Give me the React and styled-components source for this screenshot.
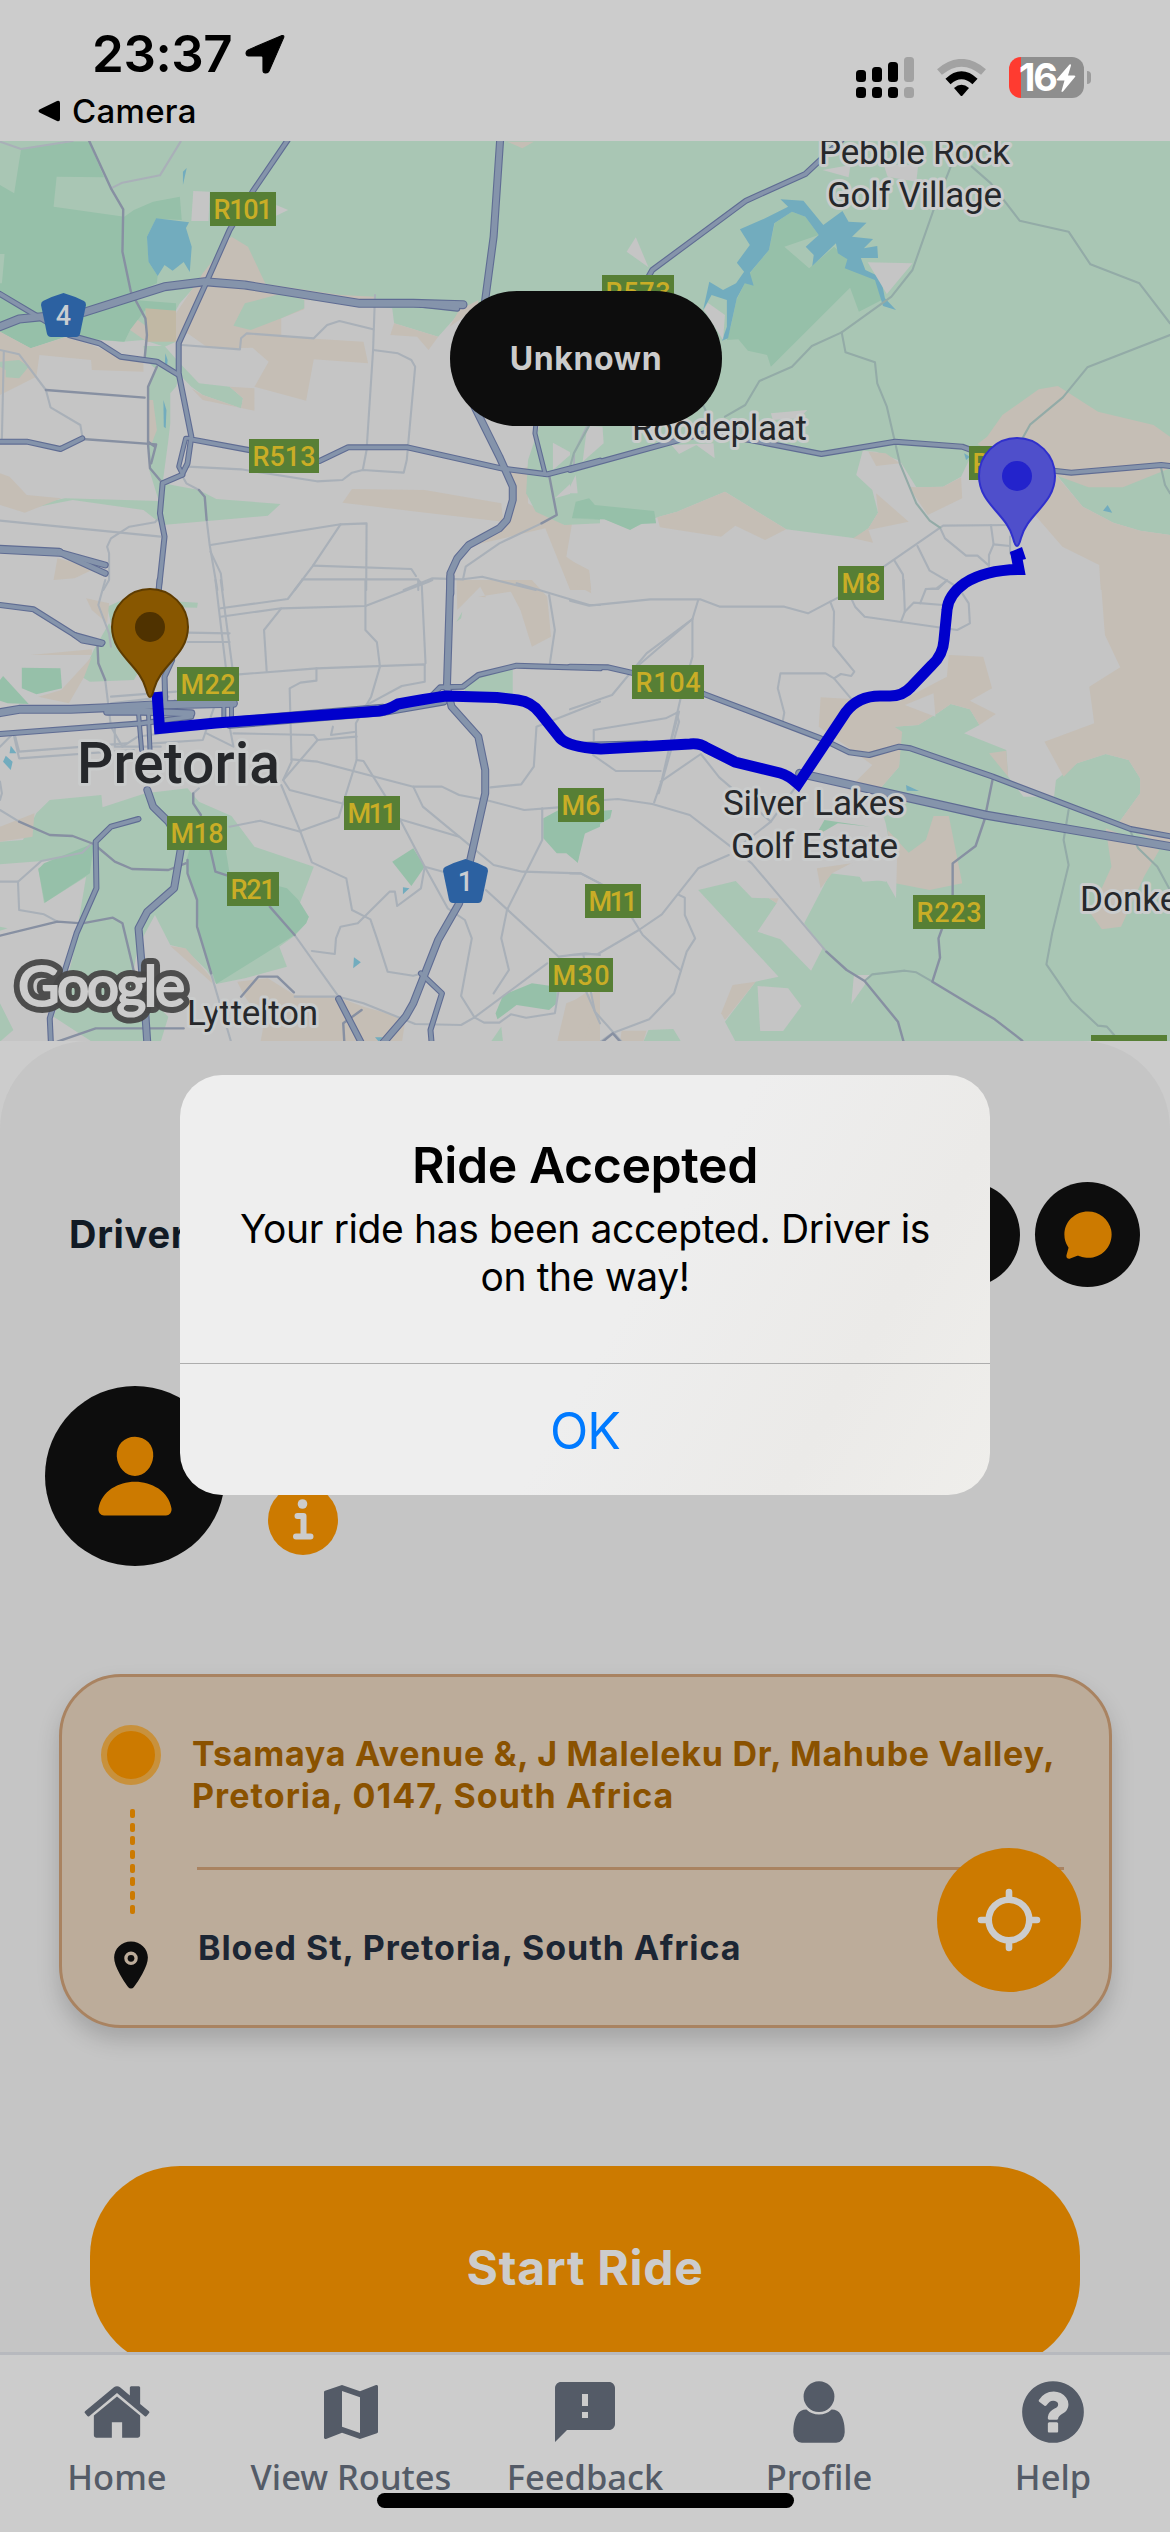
import React from "react";
import styled, { createGlobalStyle } from "styled-components";
import { IoPerson, IoChatbubble, IoCall, IoLocation } from "react-icons/io5";

const Global = createGlobalStyle`
  html, body { margin: 0; padding: 0; background: #cccccc; }
  * { box-sizing: border-box; }
`;

const ui = `Inter, "Liberation Sans", sans-serif`;
const orange = "#cc7a00";
const slate = "#545b67";

const Screen = styled.div`
  position: relative;
  width: 1170px;
  height: 2532px;
  overflow: hidden;
  display: flex;
  flex-direction: column;
  background: #cccccc;
  font-family: ${ui};
`;

/* ---------- status bar ---------- */
const StatusBar = styled.header`
  height: 141px;
  flex: none;
  display: flex;
  justify-content: space-between;
  padding: 23px 79px 0 38px;
  color: #000;
`;
const StatusLeft = styled.div`
  display: flex;
  flex-direction: column;
`;
const ClockRow = styled.div`
  display: flex;
  align-items: center;
  gap: 13px;
  height: 62px;
  padding-left: 54px;
`;
const Clock = styled.span`
  font-size: 51px;
  font-weight: 600;
  letter-spacing: -0.4px;
  line-height: 62px;
`;
const BackRow = styled.div`
  display: flex;
  align-items: center;
  gap: 11px;
  height: 40px;
  margin-top: 6px;
`;
const BackLabel = styled.span`
  font-size: 33px;
  font-weight: 500;
  letter-spacing: 0.3px;
  line-height: 40px;
`;
const StatusRight = styled.div`
  display: flex;
  align-items: flex-start;
  gap: 22px;
  padding-top: 34px;
`;
const Battery = styled.div`
  display: flex;
  align-items: center;
  gap: 3px;
`;
const BatteryBody = styled.div`
  width: 75px;
  height: 41px;
  border-radius: 12px;
  display: flex;
  align-items: center;
  justify-content: center;
  padding-left: 2px;
  background: linear-gradient(90deg, #ff3b30 12px, #8e8e8e 12px);
  color: #fff;
  font-size: 38px;
  font-weight: 700;
  letter-spacing: -2px;
  line-height: 41px;
`;
const BatteryNub = styled.div`
  width: 4px;
  height: 13px;
  border-radius: 0 4px 4px 0;
  background: #9c9c9c;
`;

/* ---------- map ---------- */
const MapArea = styled.section`
  position: relative;
  height: 900px;
  flex: none;
  background: #c5c5c5;
  overflow: hidden;
`;
const MapSvg = styled.svg`
  display: block;
  width: 1170px;
  height: 900px;
`;
const Pill = styled.div`
  position: absolute;
  left: 450px;
  top: 150px;
  width: 272px;
  height: 135px;
  border-radius: 67px;
  background: #0d0d0d;
  color: #cccccc;
  display: flex;
  align-items: center;
  justify-content: center;
  font-size: 32px;
  font-weight: 700;
  letter-spacing: 0.6px;
`;

/* ---------- sheet ---------- */
const Sheet = styled.main`
  flex: 1;
  min-height: 0;
  overflow: hidden;
  background: #c5c5c5;
  border-radius: 88px 88px 0 0;
  display: flex;
  flex-direction: column;
  padding-top: 141px;
`;
const DriverHead = styled.div`
  display: flex;
  align-items: center;
  justify-content: space-between;
  height: 105px;
  flex: none;
  padding: 0 30px 0 69px;
`;
const DriverTitle = styled.span`
  font-size: 38px;
  font-weight: 700;
  letter-spacing: 0.7px;
  padding-bottom: 2px;
  color: #111a24;
`;
const Actions = styled.div`
  display: flex;
  gap: 15px;
`;
const Disc = styled.div`
  width: ${(p) => p.$size}px;
  height: ${(p) => p.$size}px;
  flex: none;
  border-radius: 50%;
  display: flex;
  align-items: center;
  justify-content: center;
  background: ${(p) => p.$bg};
  color: ${(p) => p.$fg};
`;
const DriverRow = styled.div`
  display: flex;
  align-items: flex-end;
  gap: 43px;
  height: 180px;
  flex: none;
  margin-top: 99px;
  padding-left: 45px;
`;
const InfoSlot = styled.div`
  padding-bottom: 11px;
`;
const RouteCard = styled.section`
  position: relative;
  flex: none;
  margin: 108px 58px 0 59px;
  height: 354px;
  border: 3px solid #a98361;
  border-radius: 62px;
  background: #bcac9a;
  box-shadow: 0 12px 22px rgba(0, 0, 0, 0.17);
  display: flex;
  padding: 48px 45px 0 39px;
`;
const Track = styled.div`
  width: 60px;
  display: flex;
  flex-direction: column;
  align-items: center;
`;
const Origin = styled.div`
  width: 60px;
  height: 60px;
  border-radius: 50%;
  border: 6px solid #c8913c;
  background: ${orange};
`;
const Dashes = styled.div`
  display: flex;
  flex-direction: column;
  gap: 4.7px;
  margin: 24px 0 24px 2px;
`;
const Dash = styled.i`
  display: block;
  width: 5px;
  height: 9px;
  border-radius: 2px;
  background: ${orange};
`;
const Stops = styled.div`
  display: flex;
  flex-direction: column;
  flex: 1;
  padding-left: 31px;
`;
const Pickup = styled.div`
  display: flex;
  flex-direction: column;
  margin: 8px 0 0;
  height: 84px;
  color: #8a5200;
`;
const Address = styled.span`
  white-space: nowrap;
  font-size: 34px;
  line-height: 42px;
  font-weight: 700;
  letter-spacing: ${(p) => p.$track}px;
`;
const Rule = styled.div`
  height: 3px;
  margin: 50px 0 0 5px;
  background: #a98361;
`;
const Dropoff = styled.div`
  display: flex;
  margin: 57px 0 0 6px;
  color: #1c2634;
`;
const Locate = styled.div`
  position: absolute;
  right: 28px;
  bottom: 33px;
`;
const StartButton = styled.button`
  flex: none;
  margin: 138px 90px 0;
  height: 203px;
  padding: 0;
  border: 0;
  border-radius: 90px;
  background: ${orange};
  color: #cccccc;
  font-family: ${ui};
  font-size: 48px;
  font-weight: 700;
  letter-spacing: 0.7px;
`;

/* ---------- tab bar ---------- */
const TabBar = styled.nav`
  height: 180px;
  flex: none;
  display: grid;
  grid-template-columns: repeat(5, 1fr);
  border-top: 3px solid #b7b9be;
  background: #cccccc;
`;
const Tab = styled.div`
  display: flex;
  flex-direction: column;
  align-items: center;
  padding-top: 21px;
  color: ${slate};
`;
const TabIcon = styled.svg`
  width: 72px;
  height: 72px;
  fill: currentColor;
`;
const TabLabel = styled.span`
  margin-top: 6px;
  font-family: "Noto Sans", sans-serif;
  font-size: 34.5px;
  font-weight: 500;
  line-height: 46px;
  white-space: nowrap;
`;
const HomeIndicator = styled.div`
  position: absolute;
  left: 377px;
  bottom: 24px;
  width: 417px;
  height: 15px;
  border-radius: 8px;
  background: #000;
`;

/* ---------- alert ---------- */
const Alert = styled.div`
  position: absolute;
  left: 180px;
  top: 1075px;
  width: 810px;
  height: 420px;
  border-radius: 42px;
  overflow: hidden;
  display: flex;
  flex-direction: column;
  background: linear-gradient(120deg, #eeeeee 0%, #eeeeee 55%, #ebeae8 80%, #efeeeb 100%);
  color: #000;
  text-align: center;
`;
const AlertBody = styled.div`
  height: 288px;
  padding-top: 57px;
`;
const AlertTitle = styled.h2`
  margin: 0;
  font-size: 50px;
  font-weight: 600;
  line-height: 66px;
  letter-spacing: -0.45px;
`;
const AlertText = styled.p`
  margin: 7px 0 0;
  font-size: 39px;
  line-height: 48px;
  font-weight: 400;
  letter-spacing: -0.38px;
`;
const AlertAction = styled.button`
  flex: 1;
  padding: 3px 0 0;
  border: 0;
  border-top: 1px solid #adadad;
  background: transparent;
  color: #007aff;
  font-family: ${ui};
  font-size: 50px;
  font-weight: 400;
  letter-spacing: -1px;
`;

/* ---------- map data: four tiles, each in its own survey grid ---------- */
const G = "#a9c6b4", D = "#96c0a9", S = "#c5beb5", W = "#72acbe", L = "#c5c5c5";

const tiles = [
  {
    at: [0, 140],
    land: [
      [G, "0,0 1568,0 1568,450 1270,480 1200,520 1145,590 1030,550 1025,505 790,478 690,430 600,290 540,400 470,490 460,510 460,605 430,620 375,600 320,605 170,592 80,625 0,575"],
      [D, "55,28 190,5 232,5 272,112 148,110 140,200 325,230 350,210 400,185 470,170 475,240 408,236 384,290 388,365 412,408 410,430 360,455 350,480 460,490 460,512 380,510 340,570 325,605 170,590 80,625 0,575 0,430 5,430 12,342 0,342 0,135 37,160"],
      [S, "605,290 648,320 694,432 890,465 980,470 980,482 795,480 795,508 735,535 735,590 950,605 962,670 820,658 800,782 665,740 702,665 660,623 600,625 540,620 490,580 460,605 460,520 530,400"],
      [G, "640,490 690,475 740,460 795,480 795,505 735,535 655,570 610,557"],
      ["#c1b8a4", "380,505 460,512 460,605 384,605"],
      [S, "340,570 360,540 384,560 384,605"],
      [L, "505,153 548,155 545,243 500,243"],
      [L, "722,195 753,210 722,227"],
      [G, "375,618 430,618 470,670 520,730 600,740 635,775 630,805 530,765 500,740 470,705 460,740 445,760 445,850 440,900 425,1030 520,1050 565,1077 733,1092 700,1127 425,1155 375,1110 190,1080 80,1105 60,1100 170,1075 415,1083 390,990 385,740 410,690 380,660"],
      [S, "500,745 530,765 630,805 635,775 600,740 665,745 665,812 530,780"],
      [S, "0,575 80,625 170,592 240,615 315,650 375,660 375,695 240,690 238,660 103,645 95,710 0,765 0,665"],
      [G, "0,665 50,660 75,680 50,715 15,712 15,690 0,680"],
      [S, "0,1000 25,1010 70,1065 160,1075 65,1118 0,1095"],
      [S, "385,915 395,915 410,870 400,780 385,780"],
      [S, "920,1047 1110,1050 1310,1090 1315,1145 1090,1115 895,1088"],
      [S, "1380,980 1380,1090 1475,1155 1495,1150 1480,1250 1540,1300 1545,1350 1490,1350 1425,1165 1240,1215 1330,1150 1345,1060 1330,1000"],
      [G, "1410,857 1568,857 1568,1150 1475,1155 1400,1115 1375,1060 1380,960"],
      [L, "1445,908 1495,940 1445,990"],
      [L, "1450,1075 1510,1010 1510,1055"],
      [D, "1490,1100 1540,1075 1568,1085 1568,1140 1490,1135"],
      [S, "1030,550 1145,590 1120,630 1090,590 1020,585"],
      [S, "1200,510 1250,480 1250,500 1175,560"],
      [S, "1325,5 1395,5 1365,25"],
      [S, "150,1255 250,1285 195,1315 140,1320"],
      [W, "408,235 494,247 486,264 501,320 496,396 480,366 451,392 430,375 412,408 388,365 384,290"],
      [W, "478,95 488,84 478,135"],
      [W, "432,640 438,660 435,695 431,670"],
      [W, "427,780 435,810 433,865 428,860"],
    ],
    minor: [
      "0,5 55,27 190,3", "290,145 320,128 418,106 472,5",
      "475,615 627,628 630,595 645,580 820,595 855,555 887,543 975,568",
      "980,465 975,630 958,930 948,990",
      "975,630 1040,640 1075,660 1085,680 1063,960 1055,998 948,990 920,998 895,1020 828,1024 630,988 490,980",
      "0,630 50,643 120,750 132,802 210,855 216,895", "10,635 5,895",
      "0,1142 420,1190", "415,1135 405,1147 338,1160 290,1195 280,1220 285,1240 285,1320 270,1350",
      "475,1005 487,1030 520,1050", "540,1140 548,1215 568,1350", "550,1235 577,1300 582,1350",
      "550,1215 890,1153 958,1150 957,1350", "890,1153 818,1277 770,1350", "818,1277 1075,1287 1087,1308",
      "790,1318 1093,1318 1093,1350", "1055,1350 1130,1315 1210,1318 1260,1310 1400,1350",
      "1210,1318 1217,1280 1305,1210 1415,1150", "1500,975 1500,940 1535,857",
    ],
    mid: [
      "232,0 290,145 322,208 320,335 342,455 380,535 384,585 378,655",
      "410,680 387,740 387,915 392,985 425,1030", "215,897 408,913 395,970", "387,905 405,920",
      "120,750 378,773", "1435,1005 1455,1125 1415,1150", "520,1050 535,1070 540,1140",
    ],
    major: [
      [8, "0,560 50,537 110,530 220,517 430,440 535,425 640,435 940,490 1080,490 1210,494"],
      [5, "1100,494 1195,506"],
      [7, "1307,0 1290,290 1268,480 1240,800 1305,950 1340,1040 1340,1080 1325,1140 1305,1165 1225,1215 1195,1255 1177,1300 1177,1360"],
      [5, "752,0 660,155 600,270 540,425 467,610 467,700 500,890 490,970 475,1005 425,1030 418,1120 430,1190 415,1350"],
      [4, "500,895 485,895 467,980 478,1005"],
      [5, "0,462 85,520 180,585 260,610 315,650 410,665 467,705"],
      [5, "500,898 650,930 740,950 835,963 910,922 1065,922 1310,985 1430,1003 1568,962"],
      [4, "1400,857 1398,880 1425,1003"],
      [5, "0,905 70,905 158,927 215,895"],
      [8, "0,1228 155,1237"], [6, "155,1237 275,1275"], [6, "155,1237 275,1300"],
    ],
  },
  {
    at: [570, 140],
    land: [
      [G, "0,0 1568,0 1568,1185 1490,1172 1420,1148 1340,1100 1272,1005 1160,930 1043,960 1022,1010 975,1040 905,1042 862,962 800,935 765,932 748,1005 790,1050 805,1118 780,1165 745,1195 565,1168 405,1055 280,1115 228,1132 157,1168 90,1138 0,1140"],
      [S, "1065,912 1090,890 1130,825 1225,748 1275,738 1380,815 1525,855 1568,890 1568,985 1445,1042 1355,1042 1275,1008 1200,1000"],
      [S, "1270,1005 1340,1100 1420,1148 1490,1172 1568,1185 1568,1350 1387,1350 1383,1275 1287,1220 1215,1125"],
      [S, "405,1055 565,1168 510,1200 432,1157 395,1190 235,1162 228,1132 280,1115"],
      [S, "780,935 825,940 862,970 800,978"],
      [S, "905,1042 975,1040 1022,1012 1025,1075 935,1125 885,1040"],
      [S, "800,1060 885,1145 780,1170 792,1208 740,1195 780,1165 805,1118"],
      [S, "0,1260 50,1290 55,1350 0,1350"],
      [D, "15,1085 50,1075 65,1095 220,1113 225,1150 185,1152 157,1170 90,1138 5,1135"],
      [D, "535,250 580,215 615,230 650,285 560,320 625,385 690,320 725,355 750,390 800,410 815,480 755,515 732,443 525,680 515,645 465,632 440,598 410,600 420,560 435,480 470,400 520,330"],
      [W, "550,178 610,182 662,255 712,213 728,245 775,248 737,290 792,297 768,325 803,318 805,354 760,354 772,390 812,412 823,475 852,510 818,498 797,420 718,385 725,358 700,340 695,310 633,378 637,345 616,320 650,285 615,230 580,215 534,250 520,330 470,398 480,437 457,430 436,475 413,595 397,602 410,560 410,480 370,465 348,510 364,425 400,450 434,430 455,395 436,368 470,315 444,268 510,235 570,200"],
      [L, "172,292 205,382 148,335"], [L, "660,90 733,75 728,112"], [L, "820,75 910,75 905,125 830,110"],
      [L, "778,367 895,370 828,462"], [L, "360,488 405,525 400,600 350,510"], [L, "525,820 620,810 600,835 530,840"],
      [L, "45,857 85,860 88,910 33,965"], [L, "0,1040 15,1005 20,1060 0,1060"], [L, "265,915 375,910 378,955 330,915 285,942"],
      [W, "1030,940 1045,950 1035,960"], [W, "1405,1095 1417,1118 1393,1112"],
    ],
    minor: [
      "1150,1155 975,1157 820,1280", "967,1163 980,1195 1035,1247 1065,1247 1095,1277",
      "1100,1155 1107,1213 1150,1218", "1107,1213 1095,1245 1095,1277", "908,1218 940,1292 985,1322 1003,1335",
      "848,1262 870,1303 872,1350", "930,1347 958,1345 985,1322", "1150,1190 1150,1240",
    ],
    dim: [
      "995,80 950,210 895,390 840,470 710,577 632,618 580,680 495,723 458,795 405,830",
      "1050,80 1100,130 1175,242 1303,275 1360,373 1488,430 1568,550",
      "1568,585 1352,682 1288,772 1203,853 1180,900",
      "710,577 720,637 797,667 803,730 828,800 862,970 905,1090 940,1142 967,1163",
      "1545,985 1555,1035 1568,1060", "348,795 358,820", "0,980 10,940 50,857",
    ],
    mid: [],
    major: [
      [5, "710,0 615,102 460,182 215,390 205,410"],
      [5, "0,990 270,905 350,880 470,900 657,942 850,905 1025,920 1060,935 1170,980 1310,998 1545,975 1575,979"],
    ],
  },
  {
    at: [0, 580],
    land: [
      [G, "280,80 330,55 400,60 517,68 515,83 400,80 290,130"],
      [G, "245,210 285,130 330,220 365,270 350,300 235,305 213,290"],
      [D, "57,263 158,265 162,325 95,343 57,325"],
      [D, "8,288 75,372 20,370 0,362 0,300"],
      [S, "225,55 285,70 280,130 240,90"], [S, "160,330 240,230 220,290 180,370 100,350"], [S, "80,225 240,208 240,225"],
      [G, "0,785 60,780 95,700 130,660 265,645 268,682 380,640 490,625 520,665 605,708 665,800 820,860 780,980 807,1010 800,1030 770,1067 730,1100 750,1160 640,1195 565,1212 540,1170 480,1105 445,1095 405,1005 360,1100 345,1200 440,1310 420,1385 240,1385 140,1310 175,1200 190,1130 225,890 115,970 100,865 145,840 0,853"],
      [D, "100,868 115,850 245,790 235,880 117,968"],
      [D, "495,810 590,810 600,880 750,925 780,960 807,1010 800,1030 770,1065 565,1212 520,1060 515,960 485,850"],
      [S, "0,740 90,700 85,770 0,785"], [S, "445,1098 485,1105 550,1190 555,1210"],
      [S, "620,1205 700,1195 770,1245 890,1255 950,1280 1060,1315 1050,1390 680,1390 690,1330 640,1250"],
      [G, "0,1270 35,1350 0,1385"], [G, "0,1040 20,1045 0,1052"],
      [D, "1025,845 1080,805 1110,860 1075,918"],
      [D, "1315,1245 1390,1210 1455,1220 1455,1270 1435,1290 1350,1275 1300,1318 1295,1300"],
      [D, "1420,775 1420,715 1460,690 1568,690 1568,740 1520,765 1510,848 1480,820 1455,820"],
      [G, "1215,325 1250,290 1340,265 1340,350 1215,340"],
      [G, "1280,1390 1310,1340 1315,1390"], [G, "1193,125 1208,95 1205,115"],
      [S, "1193,0 1390,0 1430,50 1440,170 1390,200 1360,90 1335,35 1250,50 1270,52 1255,20 1195,90"],
      [S, "1480,0 1540,0 1545,40"], [S, "1568,1230 1480,1270 1455,1390 1568,1390"],
      [W, "8,545 15,527 33,545 28,570"], [W, "28,497 43,520 25,520"], [W, "1053,922 1070,925 1053,943"],
      [W, "925,1132 943,1147 923,1165"], [W, "980,1372 1000,1372 990,1385"],
    ],
    minor: [
      "275,0 257,75 285,160 290,200", "275,300 290,440 320,500", "563,0 590,260 602,370", "577,0 607,260 600,370",
      "490,158 600,160", "490,186 600,186", "577,85 752,57 790,0", "577,110 735,85 955,78 955,0",
      "735,85 690,150 697,275", "955,78 955,150 985,187 993,260 970,350 930,430 932,540 885,712 785,753",
      "625,283 827,265 1110,253 1110,305 1050,318 950,380", "827,265 827,302 785,308 757,325 762,545 740,600 757,630 900,672",
      "1093,0 1102,10 1112,250", "955,78 1120,5 1130,0", "610,460 820,465 830,480 740,600",
      "735,615 785,755 815,847 905,895 920,990 968,1018 985,1075 1013,1175 1080,1187 1110,1178",
      "762,538 830,545 930,575 1080,620 1155,620 1200,645 1270,660 1370,690 1460,682",
      "932,540 950,543 1045,718 1110,860 1170,985 1215,1020 1233,1075 1205,1248 1240,1312",
      "1045,718 1200,770 1290,855 1365,875 1518,880 1568,910", "1080,620 1105,680 1200,770", "1110,860 1158,875",
      "1110,860 1100,925 1038,978 1032,935 1018,935 935,1030 890,1040 878,1075 875,1122 815,1113",
      "770,1065 885,1250 950,1270 1085,1332 1205,1335 1240,1312 1430,1150",
      "1270,930 1460,1130 1530,1120 1568,1125", "1417,685 1417,780 1325,990 1310,1075 1330,1170 1290,1240",
      "1282,622 1362,613 1395,560 1402,440 1568,365", "1350,10 1540,75 1568,75", "1435,45 1450,150 1437,250",
      "0,690 50,725", "0,605 5,640 0,660", "0,905 47,905 50,990 115,1003 150,1025", "47,905 108,843 215,818 240,790",
      "770,1250 890,1250", "0,500 35,460 50,535 350,510", "600,740 680,722 785,755", "505,640 520,625",
      "550,1175 605,1390", "40,470 50,515 330,490", "870,440 865,465 930,455", "830,480 932,470",
      "290,350 460,335", "290,370 440,350", "320,500 360,470 540,440", "540,460 610,500 600,440",
      "400,490 530,480 560,380", "457,360 460,420", "300,440 300,500 420,500",
      "1240,1312 1265,1328 1305,1328 1335,1303 1375,1313 1450,1300 1460,1230", "1530,1230 1568,1330",
    ],
    mid: [
      "50,725 130,765 190,768 245,792 300,845 345,867 440,870 485,850",
      "0,1067 150,1025 215,1030 295,1013 320,1030 345,1150 360,1230", "150,1385 250,1345 480,1345",
      "490,840 490,880 515,960 515,1040 552,1180", "550,810 563,875 595,887", "705,980 770,1065",
      "505,640 505,670 525,705", "255,200 257,250 275,300", "630,1250 675,1190 725,1190 768,1237", "900,1390 897,1330 945,1290",
    ],
    major: [
      [5, "0,75 88,88 195,165 268,188"], [5, "195,165 215,182 265,192"],
      [5, "417,0 410,80 450,240 430,290 432,370"],
      [7, "1177,-10 1168,320 1180,380 1250,470 1268,570 1268,640 1225,860 1200,970 1145,1080 1080,1270 1060,1310 1000,1390"],
      [8, "0,398 50,388 185,388 280,383 400,375 610,370"], [5, "0,462 370,430 500,410"],
      [7, "280,395 370,395 500,400"], [4, "362,400 370,510"], [4, "388,400 392,510"], [4, "585,375 585,410"], [4, "605,370 605,410"],
      [6, "600,436 1000,398 1160,366"], [5, "600,420 1000,380"],
      [5, "1130,345 1150,322 1210,320 1250,285 1350,257 1568,265"],
      [7, "385,630 400,680 440,725 475,790 455,925 385,995 362,1045 375,1220 385,1390"],
      [5, "362,717 290,740 250,785 252,925 200,1060 130,1315 133,1390"],
      [6, "885,1257 945,1390"], [5, "1100,1180 1155,1240 1125,1350 1128,1390"],
    ],
  },
  {
    at: [570, 580],
    land: [
      [G, "960,400 995,372 1045,388 1070,435 1030,460 1140,510 1145,590 1185,650 1265,650 1270,600 1325,550 1400,522 1460,540 1490,595 1490,640 1430,735 1535,770 1568,790 1568,1390 435,1390 405,1325 485,1205 545,1190 335,930 433,903 475,953 520,955 540,970 490,1055 550,1078 630,1172 660,1105 612,1030 680,880 755,890 825,905 850,880 825,730 800,640 860,560 865,455 845,440 910,435"],
      [S, "655,352 860,365 985,290 990,225 1080,230 1103,325 1045,362 1113,402 1070,435 1045,388 995,372 960,400 910,435 848,440 868,455 860,560 800,640 725,630 790,555 700,480 650,440"],
      [L, "875,375 950,340 955,410"],
      [S, "950,708 990,708 1025,910 940,930 850,910 830,750 885,818 930,780"],
      [S, "645,865 735,850 685,880 655,925"], [L, "735,850 855,820 852,955 825,900 765,905"],
      [S, "1387,0 1568,0 1568,800 1430,735 1490,640 1490,595 1460,540 1400,522 1325,550 1290,590 1240,485 1370,430 1357,320 1438,262 1398,165"],
      [S, "1400,745 1540,810 1500,890 1440,1040 1390,1048 1360,1000 1415,860"],
      [S, "1095,520 1140,512 1145,590"], [S, "425,1215 485,1205 405,1320 395,1300"],
      [L, "490,1218 570,1225 605,1278 557,1353 497,1353"], [L, "742,1185 785,1185 770,1215 735,1272"],
      [D, "650,750 665,720 785,740 700,730 655,760"], [D, "0,700 110,690 105,715 40,755 20,848 0,820"],
      [G, "205,1350 270,1347 293,1390 190,1390"], [S, "0,1270 45,1235 60,1300 35,1390 0,1390"],
      [S, "520,955 545,955 540,970"], [S, "135,1352 200,1352 190,1390 130,1390"], [W, "878,615 912,633 880,632"],
    ],
    minor: [
      "0,62 50,77 210,58 340,58 392,80 560,80 622,100 680,65 740,30",
      "335,60 320,117 320,230 290,350 240,600 220,667", "320,117 200,220 110,345 0,388", "180,255 320,117",
      "680,65 690,95 688,198 743,275 735,288 708,282 690,295 668,280 550,280 543,325 560,398 555,430", "690,295 745,370",
      "735,55 745,80 770,110 1012,150 1045,130 1042,70 1025,40", "872,0 875,95 865,125", "875,95 898,68 975,75",
      "915,70 930,27 962,27 985,0", "62,480 62,450 250,415 285,395 265,480", "60,525 120,573 237,573",
      "237,605 342,522 390,592 525,725", "90,660 125,657 215,672 313,705 420,800 475,850 670,1115",
      "415,825 335,865 240,1003 180,1050 73,1122 0,1125", "590,620 525,725 430,810",
      "285,945 300,953 300,1005 327,1075 305,1115 272,1240 207,1318 110,1360 80,1385",
      "0,880 28,880 120,935 190,1065 290,1172", "35,1125 65,1295 135,1385", "278,400 285,425 232,640",
    ],
    dim: [
      "770,1203 790,1183 875,1172 905,1177 947,1205",
      "1303,690 1290,780 1303,855 1260,1060 1245,1153 1310,1262 1380,1337 1403,1340 1422,1365",
      "1465,755 1485,805 1535,860 1568,930",
    ],
    mid: [
      "1105,595 1083,720 1060,798 1000,850 1000,945", "972,1047 963,1075 967,1133 947,1205 1110,1318 1182,1382",
      "670,1115 723,1170 770,1203 857,1325 873,1390", "80,1390 112,1360 135,1390",
    ],
    major: [
      [5, "0,260 100,262 160,278 350,342 655,475 730,517 782,525 860,500 890,505 1105,590 1465,747 1575,770"],
      [8, "600,580 1085,705 1575,801"], [5, "40,494 200,490"],
    ],
  },
];

const grid = (at) => `translate(${at[0]} ${at[1]}) scale(0.38265 0.333333)`;

const Line = ({ pts, color, w }) => (
  <polyline points={pts} fill="none" stroke={color} strokeWidth={w} strokeLinejoin="round" strokeLinecap="round" vectorEffect="non-scaling-stroke" />
);

const Land = ({ t }) => (
  <g transform={grid(t.at)}>
    {t.land.map(([c, p], i) => <polygon key={i} points={p} fill={c} />)}
  </g>
);
const SmallRoads = ({ t }) => (
  <g transform={grid(t.at)}>
    {t.minor.map((p, i) => <Line key={i} pts={p} color="#a9b0b8" w={2.1} />)}
    {(t.dim || []).map((p, i) => <Line key={i} pts={p} color="#93aba7" w={2.1} />)}
    {t.mid.map((p, i) => <Line key={i} pts={p} color="#8790a2" w={2.4} />)}
  </g>
);
const BigRoads = ({ t, casing }) => (
  <g transform={grid(t.at)}>
    {t.major.map(([w, p], i) => <Line key={i} pts={p} color={casing ? "#5f6c93" : "#8594ab"} w={casing ? w + 1 : w - 1.2} />)}
  </g>
);

const shields = [
  ["R101", 210, 192, 66], ["R513", 249, 439, 70], ["R573", 602, 275, 72], ["R513", 969, 446, 72],
  ["M8", 838, 566, 46], ["M22", 177, 667, 62], ["M11", 344, 796, 56], ["M18", 167, 816, 60],
  ["R21", 227, 872, 52], ["R104", 632, 665, 72], ["M6", 558, 788, 46], ["M11", 585, 884, 56],
  ["M30", 549, 958, 64], ["R223", 913, 895, 72], ["", 1091, 1035, 76],
];
const places = [
  ["Pebble Rock", 819, 164, 191], ["Golf Village", 827, 206.5, 175], ["Roodeplaat", 632, 440, 175],
  ["Silver Lakes", 723, 815, 182], ["Golf Estate", 731, 858, 167], ["Lyttelton", 187, 1024.5, 131],
];

const National = ({ x, y, n }) => (
  <g transform={`translate(${x} ${y})`}>
    <path d="M22.5 0 Q33 3 43 8 Q45 9 45 12 L39 41 Q38 44 35 44 H10 Q7 44 6 41 L0 12 Q0 9 2 8 Q12 3 22.5 0Z" fill="#2c61a1" />
    <text x="22.5" y="32" textAnchor="middle" fontFamily="Roboto" fontWeight="500" fontSize="27" fill="#c9cdd2">{n}</text>
  </g>
);
const MapPin = ({ x, y, fill, edge, dot }) => (
  <g transform={`translate(${x} ${y})`}>
    <path d="M0 70 C-2 70 -3 66 -4 62 C-10 38 -38 28 -38 0 A38 38 0 0 1 38 0 C38 28 10 38 4 62 C3 66 2 70 0 70Z" fill={fill} stroke={edge} strokeWidth="2" />
    <circle r="15" fill={dot} />
  </g>
);

const CityMap = () => (
  <MapSvg viewBox="0 141 1170 900">
    {tiles.map((t, i) => <Land key={i} t={t} />)}
    {tiles.map((t, i) => <SmallRoads key={i} t={t} />)}
    {tiles.map((t, i) => <BigRoads key={i} t={t} casing />)}
    {tiles.map((t, i) => <BigRoads key={i} t={t} />)}
    {places.map(([s, x, y, w]) => (
      <text key={s} x={x} y={y} textLength={w} fontFamily="Roboto" fontSize="35" fill="#26282b" stroke="#cacccc" strokeWidth="6" strokeLinejoin="round" paintOrder="stroke">{s}</text>
    ))}
    <text x="1080" y="911" fontFamily="Roboto" fontSize="35" fill="#26282b" stroke="#cacccc" strokeWidth="6" strokeLinejoin="round" paintOrder="stroke">Donke</text>
    <text x="77" y="783" textLength="203" fontFamily="Roboto" fontWeight="500" fontSize="57" fill="#26282b" stroke="#cacccc" strokeWidth="6" strokeLinejoin="round" paintOrder="stroke">Pretoria</text>
    {shields.map(([s, x, y, w], i) => (
      <g key={i}>
        <rect x={x} y={y} width={w} height="34" fill="#577f35" />
        {s && <text x={x + w / 2} y={y + 26.5} textAnchor="middle" textLength={w - 7} fontFamily="Roboto" fontWeight="500" fontSize="27" fill="#c9ad26">{s}</text>}
      </g>
    ))}
    <National x={41} y={293} n="4" />
    <National x={443} y={859} n="1" />
    <path
      d="M157 692 L159.5 728.5 L216 723 L379 711 Q388 710 398 704 Q425 699 446 696 L497 697.5 L518 700 Q532 702 540 713 L560 738 Q568 747 601 749 L690 744 Q700 743 707 748 L735 762 L780 773 Q788 775 798 784 L846 712 Q858 696 880 696 L890 696 Q903 696 911 687 L932 665 Q943 655 944 640 L947 610 Q948 595 965 583 Q985 570 1019 569.5 L1015.5 551"
      fill="none" stroke="#0000cc" strokeWidth="11"
    />
    <path d="M1010 552 L1022 547 L1026 559 L1013 562Z" fill="#0000cc" />
    <MapPin x={150} y={627} fill="#885700" edge="#5e3c00" dot="#4f3200" />
    <MapPin x={1017} y={476} fill="#4f4fcb" edge="#3030cc" dot="#2323cc" />
    <text x="18" y="1006" textLength="167" fontFamily="Lato" fontWeight="400" fontSize="57" fill="#cccccc" stroke="#474747" strokeOpacity="0.95" strokeWidth="14" strokeLinejoin="round" paintOrder="stroke">Google</text>
    <text x="18" y="1006" textLength="167" fontFamily="Lato" fontWeight="400" fontSize="57" fill="#cccccc" stroke="#cccccc" strokeWidth="2.2">Google</text>
  </MapSvg>
);

/* ---------- icons ---------- */
const ArrowIcon = () => (
  <svg width="40" height="40" viewBox="0 0 39 39"><path d="M36 1.500 L3 15.500 C0 17 0.500 21.500 3.500 21.500 H16 C17 21.500 17.500 22 17.500 23 V35.500 C17.500 38.500 22 39 23.500 36 L37.500 4 C38.500 2 37.500 1 36 1.500Z" fill="#000" stroke="#000" /></svg>
);
const BackIcon = () => (
  <svg width="23" height="22" viewBox="0 0 23 22"><path d="M1.500 9.500 L19 1 Q22 0 22 3 V19 Q22 22 19 21 L1.500 12.500 Q-.5 11 1.500 9.500Z" fill="#000" /></svg>
);
const SignalIcon = () => (
  <svg width="58" height="41" viewBox="0 0 58 41">
    {[[0, 13], [16, 10], [32, 5], [48, 0]].map(([x, y], i) => (
      <g key={x} fill={i === 3 ? "#a2a2a2" : "#000"}>
        <rect x={x} y={y} width="10" height={25 - y} rx="3.5" />
        <rect x={x} y="30" width="10" height="11" rx="3.5" />
      </g>
    ))}
  </svg>
);
const WifiSvg = styled.svg`
  margin-top: 2px;
`;
const WifiIcon = () => (
  <WifiSvg width="51" height="38" viewBox="0 0 51 38">
    <path d="M3.500 13 Q25.500 -5.500 47.500 13" fill="none" stroke="#a2a2a2" strokeWidth="7.500" />
    <path d="M12 22.500 Q25.500 10 39 22.500" fill="none" stroke="#000" strokeWidth="7.500" />
    <path d="M18 29 Q25.500 22.500 33 29 L26.500 36.500 Q25.500 37.500 24.500 36.500Z" fill="#000" />
  </WifiSvg>
);
const BoltIcon = () => (
  <svg width="20" height="28" viewBox="0 0 20 28"><path d="M13.500 0.500 L1 15 Q0 16.500 2 16.500 H8.500 L5.500 27 Q5.500 28.500 7 27.500 L19 13 Q20 11.500 18 11.500 H12 L15 1.500 Q15 -.5 13.500 .5Z" fill="#fff" /></svg>
);
const CrosshairIcon = () => (
  <svg width="64" height="64" viewBox="-32 -32 64 64" fill="none" stroke="#cccccc" strokeWidth="6.600" strokeLinecap="round">
    <circle r="20.300" /><path d="M0 -28V-22M0 28V22M-28 0H-22M28 0H22" />
  </svg>
);
const InfoIcon = () => (
  <svg width="22" height="42" viewBox="0 0 22 42" fill="none" stroke="#cccccc" strokeWidth="6" strokeLinecap="round" strokeLinejoin="round">
    <circle cx="10.500" cy="5" r="4.800" fill="#cccccc" stroke="none" />
    <path d="M5.500 17H11.500V37M4 37.500H18.500" />
  </svg>
);

const tabs = [
  ["Home", 1792, "M1472 992v480q0 26-19 45t-45 19h-384v-384h-256v384h-384q-26 0-45-19t-19-45v-480q0-1 .5-3t.5-3l575-474 575 474q1 2 1 6zm223-69l-62 74q-8 9-21 11h-3q-13 0-21-7l-692-577-692 577q-12 8-24 7-13-2-21-11l-62-74q-8-10-7-23.5t11-21.5l719-599q32-26 76-26t76 26l244 204v-195q0-14 9-23t23-9h192q14 0 23 9t9 23v408l219 182q10 8 11 21.5t-7 23.5z"],
  ["View Routes", 24, "M20.5 3l-.16.03L15 5.1 9 3 3.36 4.9c-.21.07-.36.25-.36.48V20.5c0 .28.22.5.5.5l.16-.03L9 18.9l6 2.1 5.64-1.9c.21-.07.36-.25.36-.48V3.5c0-.28-.22-.5-.5-.5zM15 19l-6-2.110V5l6 2.110V19z"],
  ["Feedback", 24, "M20 2H4c-1.1 0-1.990.9-1.990 2L2 22l4-4h14c1.100 0 2-.9 2-2V4c0-1.100-.9-2-2-2zm-7 12h-2v-2h2v2zm0-4h-2V6h2v4z"],
  ["Profile", 1792, "M1536 1399q0 109-62.5 187t-150.5 78h-854q-88 0-150.500-78t-62.500-187q0-85 8.500-160.500t31.500-152 58.500-131 94-89 134.500-34.500q131 128 313 128t313-128q76 0 134.500 34.500t94 89 58.500 131 31.500 152 8.500 160.500zm-256-887q0 159-112.500 271.500t-271.500 112.500-271.500-112.500-112.500-271.500 112.500-271.500 271.500-112.500 271.500 112.500 112.500 271.500z"],
  ["Help", 1792, "M1024 1376v-192q0-14-9-23t-23-9h-192q-14 0-23 9t-9 23v192q0 14 9 23t23 9h192q14 0 23-9t9-23zm256-672q0-88-55.500-163t-138.500-116-170-41q-243 0-371 213-15 24 8 42l132 100q7 6 19 6 16 0 25-12 53-68 86-92 34-24 86-24 48 0 85.500 26t37.500 59q0 38-20 61t-68 45q-63 28-115.500 86.500t-52.500 125.500v36q0 14 9 23t23 9h192q14 0 23-9t9-23q0-19 21.500-49.500t54.500-49.500q32-18 49-28.500t46-35 44.500-48 28-60.500 12.500-81zm384 192q0 209-103 385.500t-279.500 279.500-385.500 103-385.500-103-279.500-279.500-103-385.500 103-385.500 279.500-279.500 385.500-103 385.500 103 279.500 279.500 103 385.500z"],
];

export default function App() {
  return (
    <Screen>
      <Global />
      <StatusBar>
        <StatusLeft>
          <ClockRow><Clock>23:37</Clock><ArrowIcon /></ClockRow>
          <BackRow><BackIcon /><BackLabel>Camera</BackLabel></BackRow>
        </StatusLeft>
        <StatusRight>
          <SignalIcon />
          <WifiIcon />
          <Battery>
            <BatteryBody>16<BoltIcon /></BatteryBody>
            <BatteryNub />
          </Battery>
        </StatusRight>
      </StatusBar>

      <MapArea>
        <CityMap />
        <Pill>Unknown</Pill>
      </MapArea>

      <Sheet>
        <DriverHead>
          <DriverTitle>Driver</DriverTitle>
          <Actions>
            <Disc $size={105} $bg="#0d0d0d" $fg={orange}><IoCall size={44} /></Disc>
            <Disc $size={105} $bg="#0d0d0d" $fg={orange}><IoChatbubble size={54} /></Disc>
          </Actions>
        </DriverHead>
        <DriverRow>
          <Disc $size={180} $bg="#0d0d0d" $fg={orange}><IoPerson size={90} /></Disc>
          <InfoSlot><Disc $size={70} $bg={orange} $fg="#cccccc"><InfoIcon /></Disc></InfoSlot>
        </DriverRow>
        <RouteCard>
          <Track>
            <Origin />
            <Dashes>{Array.from({ length: 8 }, (_, i) => <Dash key={i} />)}</Dashes>
            <IoLocation size={54} color="#0d0d0d" />
          </Track>
          <Stops>
            <Pickup>
              <Address $track={0.73}>Tsamaya Avenue &amp;, J Maleleku Dr, Mahube Valley,</Address>
              <Address $track={1.08}>Pretoria, 0147, South Africa</Address>
            </Pickup>
            <Rule />
            <Dropoff><Address $track={0.95}>Bloed St, Pretoria, South Africa</Address></Dropoff>
          </Stops>
          <Locate><Disc $size={144} $bg={orange} $fg="#cccccc"><CrosshairIcon /></Disc></Locate>
        </RouteCard>
        <StartButton>Start Ride</StartButton>
      </Sheet>

      <TabBar>
        {tabs.map(([label, box, d]) => (
          <Tab key={label}>
            <TabIcon viewBox={`0 0 ${box} ${box}`}><path d={d} /></TabIcon>
            <TabLabel>{label}</TabLabel>
          </Tab>
        ))}
      </TabBar>

      <HomeIndicator />

      <Alert>
        <AlertBody>
          <AlertTitle>Ride Accepted</AlertTitle>
          <AlertText>Your ride has been accepted. Driver is<br />on the way!</AlertText>
        </AlertBody>
        <AlertAction>OK</AlertAction>
      </Alert>
    </Screen>
  );
}
